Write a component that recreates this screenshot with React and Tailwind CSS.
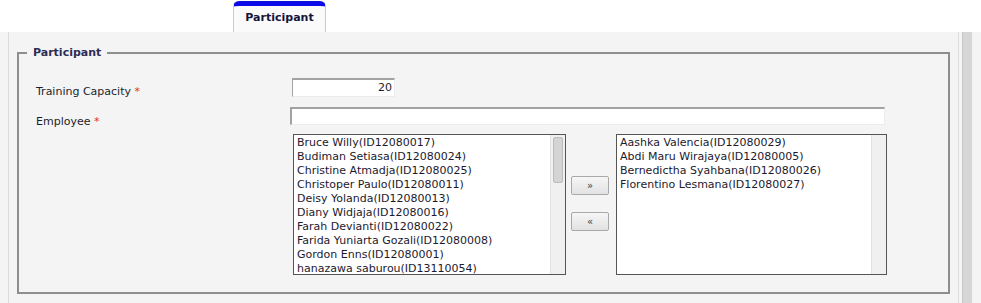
import React from 'react'

const available = [
  'Bruce Willy(ID12080017)',
  'Budiman Setiasa(ID12080024)',
  'Christine Atmadja(ID12080025)',
  'Christoper Paulo(ID12080011)',
  'Deisy Yolanda(ID12080013)',
  'Diany Widjaja(ID12080016)',
  'Farah Devianti(ID12080022)',
  'Farida Yuniarta Gozali(ID12080008)',
  'Gordon Enns(ID12080001)',
  'hanazawa saburou(ID13110054)',
]

const selected = [
  'Aashka Valencia(ID12080029)',
  'Abdi Maru Wirajaya(ID12080005)',
  'Bernedictha Syahbana(ID12080026)',
  'Florentino Lesmana(ID12080027)',
]

// plain list box, scroll column drawn on the right edge
function ListBox({ items, width, enabled }) {
  return (
    <div className={`${width} h-[141px] flex bg-white border border-[#555555] overflow-hidden`}>
      <div className="flex-1 pl-[3px] pt-[1px] overflow-hidden">
        {items.map((item) => (
          <div key={item} className="h-[14px] leading-[14px] whitespace-nowrap text-[#1c1a2e]">{item}</div>
        ))}
      </div>
      <div className="w-[15px] h-full bg-[#f0f0f0] border-l border-[#e2e2e2] flex justify-center pt-[2px]">
        {enabled && (
          <div className="w-[10px] h-[46px] rounded-[2px] bg-[#d4d4d4] border border-[#bdbdbd]" />
        )}
      </div>
    </div>
  )
}

function MoveButton({ children }) {
  return (
    <button className="w-[38px] h-[19px] flex items-center justify-center rounded-[2px] border border-[#a9a9a9] bg-gradient-to-b from-[#f6f6f6] to-[#e2e2e2] text-[10px] text-[#444444]">
      {children}
    </button>
  )
}

export default function App() {
  return (
    <div className="w-[981px] h-[303px] overflow-hidden bg-white font-['DejaVu_Sans',sans-serif] text-[11px] text-[#1e1e2a]">
      {/* tab strip */}
      <div className="h-8 flex items-end pl-[233px]">
        <div className="w-[93px] h-[31px] rounded-t-[6px] border-t-[5px] border-t-[#0b0be8] border-x border-x-[#cccccc] bg-[#fafafa] flex items-center justify-center pb-[2px] font-bold text-[#14143a]">
          Participant
        </div>
      </div>

      <div className="h-[271px] flex bg-[#f4f4f4]">
        <div className="w-[9px] border-r border-[#dcdcdc]" />

        <fieldset className="ml-[8px] mt-[14px] w-[933px] h-[248px] border-2 border-[#8e8e8e]">
          <legend className="ml-[8px] px-[6px] leading-[14px] font-bold text-[#2c2c54]">Participant</legend>

          <div className="pl-[17px]">
            <div className="flex mt-[18px] h-[19px]">
              <div className="w-[254px] pt-[7px] leading-[14px]">
                Training Capacity <span className="text-[#e03030]">*</span>
              </div>
              <div className="ml-[2px] w-[103px] h-[19px] bg-white border-t-2 border-l border-t-[#a2a2a2] border-l-[#a2a2a2] border-r border-b border-r-[#ececec] border-b-[#ececec] text-right pr-[2px] leading-[16px]">
                20
              </div>
            </div>

            <div className="flex mt-[10px] h-[19px]">
              <div className="w-[254px] pt-[8px] leading-[14px]">
                Employee <span className="text-[#e03030]">*</span>
              </div>
              <div className="w-[595px] h-[18px] bg-white border-t-2 border-l-2 border-t-[#a2a2a2] border-l-[#a2a2a2] border-r border-b border-r-[#ececec] border-b-[#ececec]" />
            </div>

            <div className="flex mt-[8px] ml-[257px]">
              <ListBox items={available} width="w-[273px]" enabled />
              <div className="w-[50px] flex flex-col items-center pt-[42px] gap-[17px] pr-[2px]">
                <MoveButton>»</MoveButton>
                <MoveButton>«</MoveButton>
              </div>
              <ListBox items={selected} width="w-[271px]" />
            </div>
          </div>
        </fieldset>

        {/* page scroll column */}
        <div className="ml-[8px] w-[1px] bg-[#dedede]" />
        <div className="w-[3px]" />
        <div className="w-[10px] bg-[#d6d6d6] border-l border-[#c6c6c6]" />
        <div className="flex-1 bg-[#f4f4f4]" />
      </div>
    </div>
  )
}
